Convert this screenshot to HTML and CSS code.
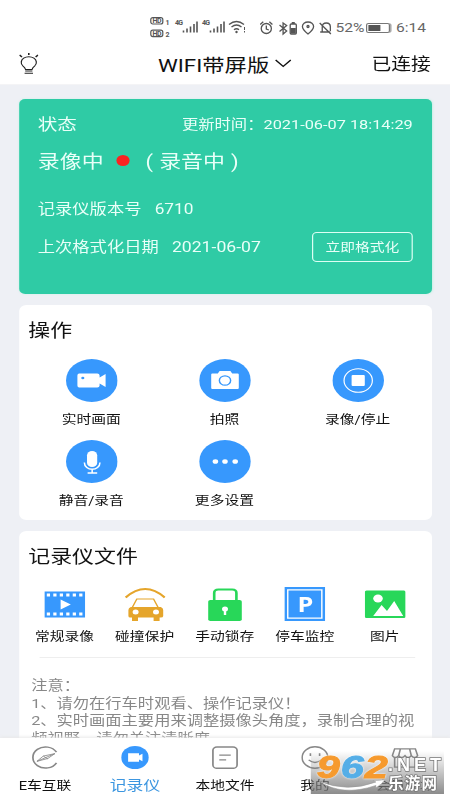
FILE: index.html
```html
<!DOCTYPE html>
<html lang="zh-CN">
<head>
<meta charset="utf-8">
<title>记录仪</title>
<link rel="stylesheet" href="styles.css">
</head>
<body>
<div class="screen">
  <div class="status">
    <svg class="status-icons" width="82" height="24" viewBox="0 0 98.4 24" preserveAspectRatio="none">
      <g fill="none" stroke="#555" stroke-width="1.2">
        <rect x=".8" y="1.6" width="12" height="6.4" rx="2"/><rect x=".8" y="14.2" width="12" height="6.4" rx="2"/>
      </g>
      <g class="tiny"><text x="2.5" y="7.2" textLength="9">HD</text><text x="2.5" y="19.8" textLength="9">HD</text><text x="15.5" y="8.5">1</text><text x="15.5" y="21">2</text><text x="25" y="9" textLength="8">4G</text><text x="52" y="9" textLength="8">4G</text></g>
      <path d="M33.5 14.5v2M37 12.5v4M40.5 10.5v6M44 8v8.500M47 5.500v11M60.500 14.500v2M64 12.500v4M67.500 10.500v6M71 8v8.500M74 5.500v11" stroke="#555" stroke-width="1.6"/>
      <path d="M79 8.500q7.500-6 15 0M81.500 11q5-4 10 0M84 13.700q2.500-2 5 0" fill="none" stroke="#555" stroke-width="1.4"/><circle cx="86.500" cy="16" r="1.200" fill="#555"/><path d="M94.500 11v3m0 1v1.500" stroke="#555"/>
    </svg>
    <svg class="status-icons2" width="61" height="16" viewBox="0 0 72 16" preserveAspectRatio="none" fill="none" stroke="#555" stroke-width="1.300">
      <ellipse cx="7" cy="8.500" rx="5" ry="5"/><path d="M7 5.500v3.500l2.500 1M1 4.500l3-2.700M13 4.500l-3-2.700"/>
      <path d="M20 5l7 6-3.500 3V3l3.500 2.500-7 6"/><rect x="30.500" y="4" width="6" height="10" rx="1"/><path fill="#555" d="M31 8h5v5.500h-5zM32 2h3v2h-3z" stroke="none"/>
      <path d="M48 14Q42.500 9.500 42.500 6.500a5.500 4.500 0 0 1 11 0Q53.500 9.500 48 14z"/><circle cx="48" cy="6.500" r="1"/>
      <path d="M60 12h10M62 12V7q0-4 4-4t4 4v4M59.500 3l11 11"/>
    </svg>
    <span class="pct">52%</span>
    <span class="battery"><i></i></span>
    <span class="clock">6:14</span>
  </div>
  <header class="top">
    <svg class="bulb" width="16" height="21" viewBox="0 0 16 21" fill="none" stroke="#222" stroke-width="1"><path d="M5.300 16.500Q5 14.500 3 12.800a6.300 5.700 0 1 1 10 0Q11 14.500 10.700 16.500zM5 18h6M4.500 20.200h7"/><path stroke-width="1.300" d="M8 0v2M.3 2l2 2M15.700 2l-2 2"/></svg>
    <h1>WIFI带屏版<svg width="14" height="9" viewBox="0 0 14 9" fill="none" stroke="#111" stroke-width="1.200"><path d="M.7 1L7 7.500 13.300 1"/></svg></h1>
    <span>已连接</span>
  </header>
  <main>
    <section class="state">
      <div class="row first"><span class="label">状态</span><span class="update">更新时间：2021-06-07 18:14:29</span></div>
      <div class="row recording"><span>录像中</span><i></i><span class="audio"><b>(</b>录音中<b>)</b></span></div>
      <div class="row version"><span>记录仪版本号</span><span>6710</span></div>
      <div class="row format"><span>上次格式化日期</span><span>2021-06-07</span><button>立即格式化</button></div>
    </section>
    <section class="card ops">
      <h2>操作</h2>
      <div class="grid3">
        <div class="item"><svg class="round" viewBox="0 0 43 43"><circle class="disc" cx="21.500" cy="21.500" r="21.500"/><path fill="#fff" d="M11 14.500h15q2 0 2 2v2l5-3.500v13l-5-3.500v2q0 2-2 2H11q-1.500 0-1.500-2v-10q0-2 1.500-2z"/><circle class="disc" cx="14" cy="19" r="1.300"/></svg><span>实时画面</span></div>
        <div class="item"><svg class="round" viewBox="0 0 43 43"><circle class="disc" cx="21.500" cy="21.500" r="21.500"/><path fill="#fff" d="M11 14.500h4.500l1.500-2.500h9l1.500 2.500H32q1 0 1 1V29q0 1-1 1H11q-1 0-1-1V15.500q0-1 1-1z"/><circle cx="21.500" cy="21.500" r="4.700" fill="#fff" stroke="#3798fd" stroke-width="1.200"/></svg><span>拍照</span></div>
        <div class="item"><svg class="round" viewBox="0 0 43 43"><circle class="disc" cx="21.500" cy="21.500" r="21.500"/><circle cx="21.500" cy="21.500" r="11.800" fill="none" stroke="#fff"/><rect x="16" y="16" width="11" height="11" rx="1" fill="#fff"/></svg><span>录像/停止</span></div>
        <div class="item"><svg class="round" viewBox="0 0 43 43"><circle class="disc" cx="21.500" cy="21.500" r="21.500"/><rect x="17.500" y="11" width="8.500" height="16" rx="4.250" fill="#fff"/><path d="M15.300 22.500c0 9 13 9 13 0M21.800 29.500v3.500M18 33h8" fill="none" stroke="#fff" stroke-width="1.300"/></svg><span>静音/录音</span></div>
        <div class="item"><svg class="round" viewBox="0 0 43 43"><circle class="disc" cx="21.500" cy="21.500" r="21.500"/><g fill="#fff"><circle cx="13.500" cy="21.500" r="2.300"/><circle cx="21.500" cy="21.500" r="2.300"/><circle cx="30" cy="21.500" r="2.300"/></g></svg><span>更多设置</span></div>
      </div>
    </section>
    <section class="card files">
      <h2>记录仪文件</h2>
      <div class="grid5">
        <div class="item"><svg viewBox="0 0 34 34"><path fill="#3798fd" d="M0 4.500h34v26H0z"/><path d="M2 8h31M2 27h31" stroke="#fff" stroke-width="2.800" stroke-dasharray="2.700 2.700"/><path fill="#fff" d="M13.500 12.500v10l8.500-5z"/></svg><span>常规录像</span></div>
        <div class="item"><svg viewBox="0 0 34 34"><path d="M.7 10.500Q17-6.500 33.300 10.500" fill="none" stroke="#e5a52b" stroke-width="2"/><path d="M6 21l4-9h14l4 9" fill="none" stroke="#e5a52b" stroke-width="1.200"/><path fill="#e5a52b" d="M5 20h25q2 1 2 3v6q0 1.500-2 1.500h-1V34h-5v-3.500H11V34H6v-3.500H4.500Q3 30.500 3 29v-6q0-2 2-3z"/><circle cx="9" cy="25" r="2.500" fill="#fff"/><circle cx="26" cy="25" r="2.500" fill="#fff"/></svg><span>碰撞保护</span></div>
        <div class="item"><svg viewBox="0 0 34 34"><path d="M8.500 14V6q0-3.500 3.500-3.500h11.500Q27 2.500 27 6v8" fill="none" stroke="#28d759" stroke-width="2.200"/><rect x="3.500" y="13" width="28" height="21" rx="1.800" fill="#28d759"/><circle cx="17.500" cy="22" r="2.500" fill="#fff"/><path d="M17.500 22v6" stroke="#fff" stroke-width="2"/></svg><span>手动锁存</span></div>
        <div class="item"><svg viewBox="0 0 34 34"><path fill="#3798fd" d="M0 0h34v34H0z"/><path d="M2.800 2.800h28.400v28.400H2.800z" fill="none" stroke="#fff" stroke-width="1.200"/><text class="park" x="17.500" y="25" text-anchor="middle">P</text></svg><span>停车监控</span></div>
        <div class="item"><svg viewBox="0 0 34 34"><rect y="3.500" width="34" height="27.500" rx="1.500" fill="#28d759"/><circle cx="11" cy="11.500" r="4" fill="#fff"/><path fill="#fff" d="M7 29l7-11 4.500 6 6-10 7.500 15z"/></svg><span>图片</span></div>
      </div>
      <hr>
      <div class="notes"><p>注意：</p><p>1、请勿在行车时观看、操作记录仪！</p><p>2、实时画面主要用来调整摄像头角度，录制合理的视频视野，请勿关注清晰度。</p></div>
    </section>
  </main>
  <nav>
    <div class="tab"><svg viewBox="0 0 24 24" fill="none" stroke="#888" stroke-width="1.500"><path d="M22 6.500A11 11 0 1 0 22 17.500"/><path d="M5 16l5.500-5.500L20.500 8l-6 5zM5 16l15.500-8M10.500 10.500l4 3" stroke-width=".8"/></svg><span>E车互联</span></div>
    <div class="tab active"><svg viewBox="0 0 24 24"><circle cx="12" cy="12" r="12" fill="#3798fd"/><path fill="#fff" d="M6 7.500h9.500v2.500L18.500 8v8l-3-2v2.500H6z"/></svg><span>记录仪</span></div>
    <div class="tab"><svg viewBox="0 0 24 24" fill="none" stroke="#888" stroke-width="1.500"><rect x="1.500" y="1" width="21" height="22.300" rx="3.500"/><path d="M7 9.500h10M7 14.500h6"/></svg><span>本地文件</span></div>
    <div class="tab"><svg viewBox="0 0 24 24" fill="none" stroke="#888" stroke-width="1.400"><circle cx="12" cy="12" r="11.200"/><path d="M6.500 14.500q5.500 5.500 11 0M8 7.500v3M16 7.500v3"/></svg><span>我的</span></div>
    <div class="tab"><svg viewBox="0 0 24 24" fill="none" stroke="#888" stroke-width="1.400"><path d="M3 3h18l2 7q-2.500 4-5.500 0-3 4-5.500 0-3 4-5.500 0-3 4-5.500 0zM3 12v10h18V12M8 3L6.500 10M16 3l1.500 7"/></svg><span>会员商城</span></div>
  </nav>
  <div class="watermark">
    <svg width="111" height="43" viewBox="0 0 133 43" preserveAspectRatio="none">
      <path d="M8 30q28 12 57 1l-3-1.500q7 0 12-1-2 4-9 8.500l0-2.500Q31 46 8 30z" fill="#fff" stroke="#999" stroke-width=".6"/>
      <g class="digits"><text x="6" y="27" textLength="23" lengthAdjust="spacingAndGlyphs" fill="#f69a2e" stroke="#f69a2e">9</text><text x="30" y="27" textLength="23" lengthAdjust="spacingAndGlyphs" fill="#55aee7" stroke="#55aee7">6</text><text x="54" y="27" textLength="23" lengthAdjust="spacingAndGlyphs" fill="#f69a2e" stroke="#f69a2e">2</text></g>
      <text class="net" x="77" y="20" textLength="53">.NET</text><text class="leyou" x="77" y="38" textLength="49">乐游网</text>
    </svg>
  </div>
</div>
</body>
</html>
```

FILE: styles.css
```css
* { box-sizing: border-box; }
body { margin: 0; width: 450px; height: 800px; overflow: hidden; background: #eef0f5; }
h1, h2, p { margin: 0; font-weight: 400; }
/* The layout is 375 wide and widened to the 450 viewport. */
.screen { position: relative; width: 375px; height: 800px; display: flex; flex-direction: column; overflow: hidden; transform: scaleX(1.2); transform-origin: 0 0; font-family: Roboto, "Noto Sans CJK SC", sans-serif; color: #111; }
.status { height: 40px; flex: none; background: #fff; display: flex; align-items: center; padding: 15px 0 0 125px; color: #666; font-size: 13px; }
.status-icons { flex: none; }
.tiny { font: bold 7px Roboto, sans-serif; fill: #555; }
.status-icons2 { flex: none; margin-left: 9px; }
.pct { margin-left: 2.500px; width: 25.500px; }
.battery { width: 20px; height: 10px; border: 1px solid #777; border-radius: 2px; padding: 1px; box-shadow: 1.500px 0 0 -.2px #aaa; }
.battery i { display: block; width: 10px; height: 6px; background: #555; }
.clock { margin-left: 5px; font-size: 13px; }
.top { height: 45px; flex: none; background: #fff; display: grid; grid-template-columns: 1fr auto 1fr; align-items: center; padding: 2px 16px 0; font-size: 16.500px; border-bottom: 1px solid #f4f4f6; }
.top h1 { font-size: 18.600px; display: flex; align-items: center; gap: 5px; }
.top > span { text-align: right; }
main { flex: 1; min-height: 0; padding: 14px 15.500px 0; display: flex; flex-direction: column; gap: 11px; overflow: hidden; }
.state { height: 195px; flex: none; border-radius: 5px; background: #2fcba5; color: #e9fff8; padding: 12px 15.500px 0 16px; display: flex; flex-direction: column; box-shadow: 0 0 2px #c8efe5; }
.row { display: flex; align-items: center; flex: none; }
.first { height: 24px; justify-content: space-between; }
.label { font-size: 16.300px; }
.update { font-size: 13.600px; }
.recording { height: 26px; margin-top: 12px; font-size: 18.300px; }
.recording i { width: 11px; height: 11px; border-radius: 50%; background: #fa2222; margin-left: 11px; }
.recording .audio { margin-left: 13px; display: flex; align-items: baseline; gap: 5px; }
.audio b { font-weight: 400; }
.version { height: 20px; margin-top: 24px; gap: 11px; font-size: 14.400px; align-items: baseline; }
.format { height: 30px; margin-top: 15px; gap: 11px; font-size: 14.400px; align-items: baseline; }
.format span:nth-child(2) { font-size: 14.700px; }
button { margin-left: auto; width: 84px; height: 30px; padding: 0; background: none; border: 1px solid #dcfff4; border-radius: 4px; color: #e9fff8; font: 12.300px "Noto Sans CJK SC", sans-serif; }
.card { flex: none; background: #fff; border-radius: 6px; padding: 0 8px; }
h2 { font-size: 18.300px; line-height: 26px; }
.ops { height: 215px; padding-top: 13px; }
.grid3 { display: grid; grid-template-columns: repeat(3, 111px); margin: 15px 0 0 -3px; }
.item { display: flex; flex-direction: column; align-items: center; height: 81px; font-size: 12.300px; line-height: 18px; white-space: nowrap; }
.round { width: 43px; height: 43px; display: block; }
.disc { fill: #3798fd; }
.ops .item span { margin-top: 9px; }
.files { height: 240px; padding-top: 13px; }
.grid5 { display: grid; grid-template-columns: repeat(5, 66.700px); margin: 17px 0 0 -3px; }
.files .item { height: 61px; }
.files .item svg { width: 34px; height: 34px; display: block; }
.files .item span { margin-top: 7px; }
.park { font: bold 21px "Open Sans", sans-serif; fill: #fff; }
hr { height: 1px; border: 0; background: #eee; margin: 9px 6px 0 9px; }
.notes { margin: 19px 0 0 2.500px; font-size: 13.550px; line-height: 17.600px; color: #888; width: 326px; }
nav { height: 62px; flex: none; background: #fff; display: grid; grid-template-columns: repeat(5, 75px); box-shadow: 0 -1px 3px #e8e8e8; position: relative; }
.tab { display: flex; flex-direction: column; align-items: center; padding-top: 8px; font-size: 12.300px; }
.tab svg { width: 23px; height: 23px; display: block; }
.tab span { line-height: 18px; margin-top: 8px; white-space: nowrap; }
.active { color: #3c96e0; font-size: 14px; }
.active span { margin-top: 7px; }
.watermark { position: absolute; left: 259.200px; top: 751px; width: 111px; height: 43px; background: linear-gradient(rgba(120,120,120,0), rgba(120,120,120,.85)); }
.watermark svg { width: 111px; height: 43px; display: block; overflow: visible; }
.digits { font: italic bold 32px "Liberation Sans", sans-serif; stroke-width: 1px; filter: drop-shadow(0 0 1px #fff); }
.net { font: bold 18px "Liberation Sans", sans-serif; fill: #fff; stroke: #777; stroke-width: 1.500px; paint-order: stroke; }
.leyou { font: bold 15.500px "Noto Sans CJK SC", sans-serif; fill: #fff; stroke: #777; stroke-width: 1.500px; paint-order: stroke; }
```
